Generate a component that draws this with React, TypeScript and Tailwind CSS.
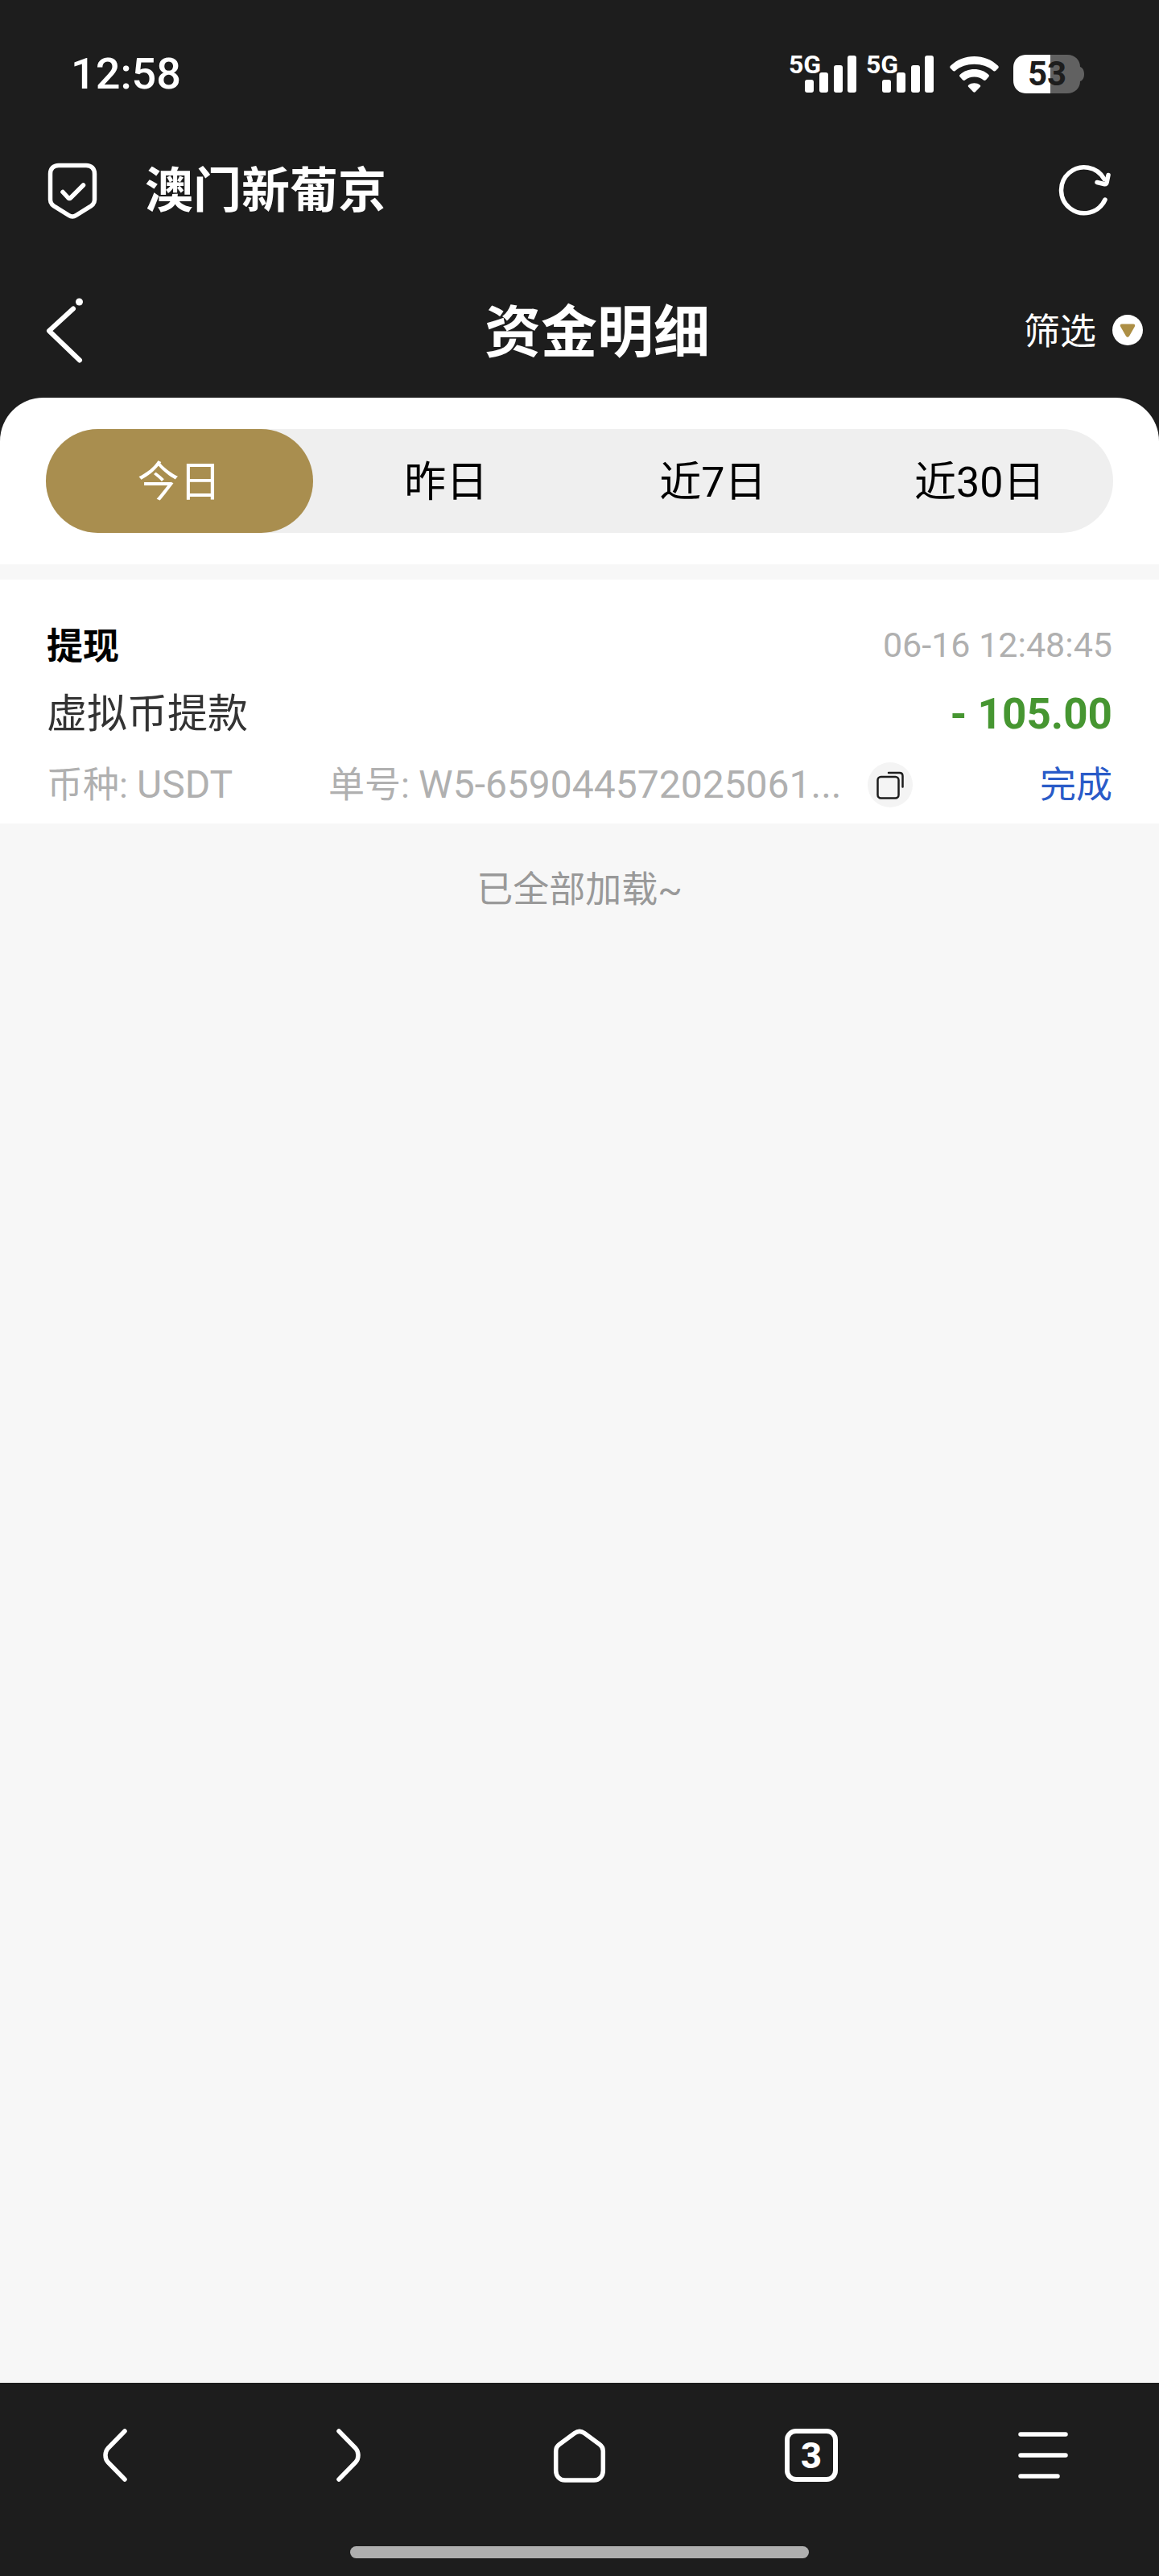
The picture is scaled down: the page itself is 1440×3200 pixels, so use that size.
import React, { useState } from "react";

const ranges = ["今日", "昨日", "近7日", "近30日"];

const records = [
  {
    type: "提现",
    time: "06-16 12:48:45",
    name: "虚拟币提款",
    amount: "- 105.00",
    currency: "USDT",
    orderNo: "W5-659044572025061...",
    status: "完成",
  },
];

const Signal: React.FC = () => (
  <div className="relative w-[84px] h-12">
    <span className="absolute left-0 top-0 text-[32px] leading-6 font-bold">
      5G
    </span>
    <svg className="w-full h-full" viewBox="0 0 84 48" fill="currentColor">
      <rect x="20" y="31" width="11" height="16" rx="3" />
      <rect x="38" y="22" width="11" height="25" rx="3" />
      <rect x="56" y="13" width="11" height="34" rx="3" />
      <rect x="73" y="1" width="11" height="46" rx="3" />
    </svg>
  </div>
);

const Wifi: React.FC = () => (
  <svg className="w-[61px] h-[46px]" viewBox="0 0 61 46" fill="currentColor">
    <path d="M1.2 12.6C9 5 19.3 1 30.5 1S52 5 59.8 12.6c1.2 1.2 1.2 2.2.4 3.2l-3 3c-1 1-2 1-3 .1C47.7 13.400 39.6 10.7 30.5 10.7S13.3 13.4 6.8 18.9c-1 .9-2 .9-3-.1l-3-3c-.8-1-.8-2 .4-3.2z" />
    <path d="M13 23.6c4.7-4.3 10.6-6.6 17.5-6.6S43.3 19.3 48 23.6c1.2 1.2 1.2 2 .3 3l-3.3 3.7c-1 1-2 1-3 .2-3.3-2.6-7-4-11.5-4s-8.2 1.4-11.5 4c-1 .8-2 .8-3-.2l-3.300-3.700c-.9-1-.9-1.8.3-3z" />
    <path d="M23.5 36.5c2-1.5 4.3-2.3 7-2.3s5 .8 7 2.3c1 .9 1 1.7.2 2.6l-5.7 5.9c-1 .9-2 .9-3 0l-5.7-5.9c-.8-.9-.8-1.7.2-2.6z" />
  </svg>
);

const Battery: React.FC = () => (
  <div className="relative w-[88px] h-12">
    <svg className="w-full h-full" viewBox="0 0 88 48">
      <path
        d="M46 0h21c10 0 16 7 16 15 3 1 5 4 5 9s-2 8-5 9c0 8-6 15-16 15H46z"
        fill="#616161"
      />
      <path d="M46 0H16C6 0 0 7 0 16v16c0 9 6 16 16 16h30z" fill="#fff" />
    </svg>
    <span className="absolute inset-0 pr-1 flex items-center justify-center text-[42px] leading-none font-bold text-[#1d1d1d]">
      53
    </span>
  </div>
);

const StatusBar: React.FC = () => (
  <div className="h-[184px] pl-[88px] pr-[93px] flex items-center justify-between">
    <span className="text-[54px] leading-none font-medium">12:58</span>
    <div className="flex items-center">
      <Signal />
      <div className="ml-3">
        <Signal />
      </div>
      <div className="ml-5">
        <Wifi />
      </div>
      <div className="ml-[18px]">
        <Battery />
      </div>
    </div>
  </div>
);

const AddressBar: React.FC = () => (
  <div className="h-[104px] px-14 flex items-center">
    <svg
      className="w-[68px] h-[72px]"
      viewBox="0 0 68 72"
      fill="none"
      stroke="currentColor"
      strokeWidth="5.5"
      strokeLinecap="round"
      strokeLinejoin="round"
    >
      <path d="M17 5.5h34c6.5 0 10.5 4 10.5 10.5v32c0 3.5-1.5 6-4.5 8L38.5 67.500c-3 2-6 2-9 0L11 56c-3-2-4.5-4.5-4.5-8V16c0-6.5 4-10.5 10.5-10.5z" />
      <path d="M22 38.5l6.5 7c1.2 1.2 2.3 1.2 3.5 0L47.5 30" />
    </svg>
    <span className="ml-14 pt-1 text-[60px] leading-none font-bold">
      澳门新葡京
    </span>
    <button className="ml-auto" aria-label="刷新">
      <svg
        className="w-[72px] h-[72px]"
        viewBox="0 0 72 72"
        fill="none"
        stroke="currentColor"
        strokeWidth="5.5"
        strokeLinecap="round"
        strokeLinejoin="round"
      >
        <path d="M61 48A28.5 28.5 0 1 1 60 22.5" />
        <path d="M51 26.5l8.5 2c2 .4 3.3-.4 3.7-2.4L65 17.5" />
      </svg>
    </button>
  </div>
);

const NavBar: React.FC = () => (
  <header className="mt-[38px] h-[168px] pl-[52px] pr-5 grid grid-cols-[1fr_auto_1fr] items-center">
    <button className="justify-self-start" aria-label="返回">
      <svg
        className="w-14 h-[84px]"
        viewBox="0 0 56 84"
        fill="none"
        stroke="currentColor"
        strokeWidth="6"
        strokeLinecap="round"
        strokeLinejoin="round"
      >
        <path d="M39 15.5L9 43l38 36.500" />
        <circle cx="46.500" cy="7" r="4.500" fill="currentColor" stroke="none" />
      </svg>
    </button>
    <h1 className="pl-3 pt-2 text-[70px] leading-none font-bold">资金明细</h1>
    <button className="justify-self-end flex items-center gap-5 text-[45px] leading-none">
      <span className="pt-1">筛选</span>
      <svg className="w-[38px] h-[38px]" viewBox="0 0 38 38">
        <circle cx="19" cy="19" r="19" fill="#fff" />
        <path
          d="M12 11.5h14c2 0 2.8 1.5 1.8 3.3l-6.3 11c-1.5 2.7-3.5 2.7-5 0l-6.3-11c-1-1.8-.2-3.300 1.800-3.300z"
          fill="#ad8f45"
        />
      </svg>
    </button>
  </header>
);

const CopyIcon: React.FC = () => (
  <svg
    className="w-14 h-14"
    viewBox="0 0 56 56"
    fill="none"
    stroke="#1d1d1d"
    strokeWidth="2.5"
    strokeLinecap="round"
  >
    <rect x="12.5" y="18" width="26" height="26.5" rx="4" />
    <path d="M26 13h13.5c2.5 0 4 1.5 4 4v13.5" />
  </svg>
);

const TabBar: React.FC = () => {
  const stroke = {
    className: "w-[72px] h-[72px]",
    viewBox: "0 0 72 72",
    fill: "none",
    stroke: "currentColor",
    strokeWidth: 5.5,
    strokeLinecap: "round" as const,
    strokeLinejoin: "round" as const,
  };

  return (
    <footer className="h-60 bg-[#1d1d1d] text-white flex flex-col items-center justify-between pb-[22px]">
      <nav className="w-full h-[180px] grid grid-cols-5 items-center justify-items-center">
        <button aria-label="后退">
          <svg {...stroke}>
            <path d="M47 6L26 27.5c-4 4.5-4 12.5 0 17L47 66" />
          </svg>
        </button>
        <button aria-label="前进">
          <svg {...stroke}>
            <path d="M25 6l21 21.5c4 4.5 4 12.5 0 17L25 66" />
          </svg>
        </button>
        <button aria-label="主页">
          <svg {...stroke}>
            <path d="M30 8.5L11 22.5c-3 2.2-4.3 4.5-4.3 8V55c0 7 4.5 12 11.3 12h36c6.8 0 11.3-5 11.3-12V30.5c0-3.5-1.3-5.8-4.3-8L42 8.5c-4-2.8-8-2.8-12 0z" />
          </svg>
        </button>
        <button
          className="w-[66px] h-[66px] border-[6px] border-white rounded-[14px] text-[45px] leading-none font-extrabold flex items-center justify-center"
          aria-label="标签页"
        >
          3
        </button>
        <button aria-label="菜单">
          <svg {...stroke}>
            <path d="M8 10h56M8 36h56M8 62h46" />
          </svg>
        </button>
      </nav>
      <div className="w-[570px] h-[15px] rounded-full bg-[#afafaf]" />
    </footer>
  );
};

const App: React.FC = () => {
  const [active, setActive] = useState(0);

  return (
    <div className="min-h-screen flex flex-col bg-[#f7f7f7] font-[Roboto,'Noto_Sans_CJK_SC',sans-serif]">
      <div className="bg-[#1d1d1d] text-white">
        <StatusBar />
        <AddressBar />
        <NavBar />
        <div className="bg-white rounded-t-[54px] px-[57px] py-[39px]">
          <div className="h-[129px] rounded-full bg-[#efefef] grid grid-cols-4">
            {ranges.map((label, i) => (
              <button
                key={label}
                onClick={() => setActive(i)}
                className={`rounded-full pt-1 text-[52px] leading-none ${
                  i === active ? "bg-[#a98e4f] text-white" : "text-black"
                }`}
              >
                {label}
              </button>
            ))}
          </div>
        </div>
      </div>

      <main className="grow mt-[19px]">
        {records.map((r) => (
          <section
            key={r.orderNo}
            className="bg-white pt-[39px] px-[58px] leading-none"
          >
            <div className="h-[84px] flex items-center justify-between">
              <h2 className="pt-1 text-[45px] font-bold text-black">
                {r.type}
              </h2>
              <time className="text-[43px] text-[#b0b0b0]">{r.time}</time>
            </div>
            <div className="h-[84px] pt-1 flex items-center justify-between">
              <span className="text-[50px] text-[#333]">{r.name}</span>
              <span className="text-[53px] font-bold text-[#469631]">
                {r.amount}
              </span>
            </div>
            <div className="h-24 flex items-center text-[45px] text-[#b0b0b0]">
              <span className="w-[350px]">
                币种: <span className="text-[48px]">{r.currency}</span>
              </span>
              <span className="w-[646px] whitespace-nowrap">
                单号: <span className="text-[48px]">{r.orderNo}</span>
              </span>
              <button
                className="ml-6 rounded-full bg-[#f4f4f4]"
                aria-label="复制单号"
              >
                <CopyIcon />
              </button>
              <span className="ml-auto text-[#2a5bc8]">{r.status}</span>
            </div>
          </section>
        ))}
        <p className="pt-[60px] text-center text-[45px] leading-none text-[#999]">
          已全部加载~
        </p>
      </main>

      <TabBar />
    </div>
  );
};

export default App;
